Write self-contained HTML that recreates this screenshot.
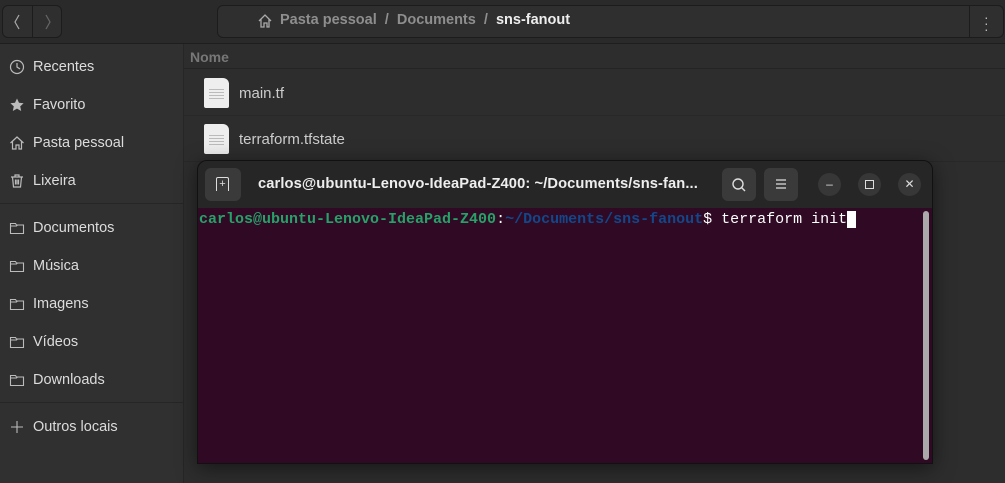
<!DOCTYPE html>
<html><head><meta charset="utf-8"><style>
*{box-sizing:border-box;margin:0;padding:0}
body{width:1005px;height:483px;background:#2d2d2d;font-family:"Liberation Sans",sans-serif;overflow:hidden;position:relative;color:#ddd}
.abs{position:absolute}
.hdr{left:0;top:0;width:1005px;height:44px;background:#2a2a2a;border-bottom:1px solid #1e1e1e}
.side{left:0;top:44px;width:184px;height:439px;background:#303030;border-right:1px solid #262626}
.si{position:absolute;left:9px;font-size:14.5px;color:#dcdcdc;display:flex;align-items:center;gap:8px}
.si svg{width:16px;height:16px}
.sep{position:absolute;left:0;width:183px;height:1px;background:#262626}
.term{left:197px;top:160px;width:736px;height:304px;background:#300a24;border:1px solid #111;border-radius:10px 10px 0 0;box-shadow:0 4px 20px rgba(0,0,0,.5);overflow:hidden}
.tb{left:0;top:0;width:736px;height:47px;background:#262626}
.btn{position:absolute;background:#3a3a3a;border-radius:6px}
.circ{position:absolute;width:23px;height:23px;border-radius:50%;background:#373737;color:#ddd;text-align:center;font-size:12px;line-height:23px}
.file{position:absolute;width:25px;height:30px;background:#eee;border-radius:2px 6px 2px 2px;background-image:repeating-linear-gradient(#eee 0 2px,#bbb 2px 3px);background-size:15px 14px;background-position:5px 9px;background-repeat:no-repeat}
</style></head><body>
<div class="abs hdr"></div>
<div class="abs" style="left:2px;top:5px;width:60px;height:33px;border:1px solid #1c1c1c;border-radius:6px;background:#2f2f2f"></div>
<div class="abs" style="left:32px;top:5px;width:1px;height:33px;background:#1c1c1c"></div>
<svg class="abs" style="left:13px;top:14px" width="8" height="16" viewBox="0 0 8 16" fill="none" stroke="#aaa" stroke-width="1.2"><path d="M6 1L2 8l4 7"/></svg>
<svg class="abs" style="left:44px;top:14px" width="8" height="16" viewBox="0 0 8 16" fill="none" stroke="#666" stroke-width="1.2"><path d="M2 1l4 7-4 7"/></svg>
<div class="abs" style="left:217px;top:5px;width:787px;height:33px;border:1px solid #1c1c1c;border-radius:6px;background:#2f2f2f"></div>
<div class="abs" style="left:969px;top:5px;width:1px;height:33px;background:#1c1c1c"></div>
<div class="abs" style="left:984px;top:14px;color:#bbb;font-size:14px;line-height:6px">·<br>·<br>·</div>
<svg class="abs" style="left:257px;top:13px" width="16" height="16" viewBox="0 0 16 16" fill="none" stroke="#aaa" stroke-width="1.3"><path d="M2 8L8 2l6 6M4 6v8h3v-4h3v4h2V6"/></svg>
<div class="abs" style="left:280px;top:12px;font-size:14.5px;font-weight:bold;color:#8e8e8e">Pasta pessoal &nbsp;/&nbsp; Documents &nbsp;/&nbsp; <span style="color:#eee">sns-fanout</span></div>

<div class="abs side">
<div class="si" style="top:15px"><svg viewBox="0 0 16 16" fill="none" stroke="#bbb" stroke-width="1.2"><circle cx="8" cy="8" r="6.5"/><path d="M8 4v4l3 2"/></svg>Recentes</div>
<div class="si" style="top:53px"><svg viewBox="0 0 16 16"><path d="M8 1.5l2 4.3 4.6.5-3.4 3.1 1 4.6L8 11.6 3.8 14l1-4.6L1.4 6.3 6 5.8z" fill="#bbb"/></svg>Favorito</div>
<div class="si" style="top:91px"><svg viewBox="0 0 16 16" fill="none" stroke="#bbb" stroke-width="1.2"><path d="M1.5 8L8 2l6.5 6M3.5 6.5V14H7v-4h3v4h2.5V6.5"/></svg>Pasta pessoal</div>
<div class="si" style="top:129px"><svg viewBox="0 0 16 16" fill="none" stroke="#bbb" stroke-width="1.2"><path d="M2 4h12M6 4V2h4v2M3.5 4l1 10h7l1-10M6.5 6.5v5M9.5 6.5v5M8 6.5v5"/></svg>Lixeira</div>
<div class="sep" style="top:159px"></div>
<div class="si" style="top:176px"><svg viewBox="0 0 16 16" fill="none" stroke="#bbb" stroke-width="1.1"><path d="M1.5 3.5h5l1 1.5h7v8.5h-13z M1.5 6h6l1-1"/></svg>Documentos</div>
<div class="si" style="top:214px"><svg viewBox="0 0 16 16" fill="none" stroke="#bbb" stroke-width="1.1"><path d="M1.5 3.5h5l1 1.5h7v8.5h-13z M1.5 6h6l1-1"/></svg>Música</div>
<div class="si" style="top:252px"><svg viewBox="0 0 16 16" fill="none" stroke="#bbb" stroke-width="1.1"><path d="M1.5 3.5h5l1 1.5h7v8.5h-13z M1.5 6h6l1-1"/></svg>Imagens</div>
<div class="si" style="top:290px"><svg viewBox="0 0 16 16" fill="none" stroke="#bbb" stroke-width="1.1"><path d="M1.5 3.5h5l1 1.5h7v8.5h-13z M1.5 6h6l1-1"/></svg>Vídeos</div>
<div class="si" style="top:328px"><svg viewBox="0 0 16 16" fill="none" stroke="#bbb" stroke-width="1.1"><path d="M1.5 3.5h5l1 1.5h7v8.5h-13z M1.5 6h6l1-1"/></svg>Downloads</div>
<div class="sep" style="top:358px"></div>
<div class="si" style="top:375px"><svg viewBox="0 0 16 16" fill="none" stroke="#bbb" stroke-width="1.1"><path d="M8 2v12M2 8h12"/></svg>Outros locais</div>
</div>

<div class="abs" style="left:184px;top:45px;width:821px;height:24px;border-bottom:1px solid #242424"></div>
<div class="abs" style="left:190px;top:49px;font-size:14px;font-weight:bold;color:#777">Nome</div>
<div class="abs" style="left:184px;top:115px;width:821px;height:1px;background:#282828"></div>
<div class="abs" style="left:184px;top:161px;width:821px;height:1px;background:#282828"></div>
<div class="file" style="left:204px;top:78px"></div>
<div class="abs" style="left:239px;top:85px;font-size:15px;color:#ccc">main.tf</div>
<div class="file" style="left:204px;top:124px"></div>
<div class="abs" style="left:239px;top:131px;font-size:15px;color:#ccc">terraform.tfstate</div>

<div class="abs term">
<div class="abs tb"></div>
<div class="btn" style="left:7px;top:7px;width:36px;height:33px"></div>
<div class="abs" style="left:18px;top:16px;width:13px;height:14px;border:1.3px solid #ddd;border-bottom:none;border-radius:2px 2px 0 0;color:#ddd;font-size:11px;line-height:12px;text-align:center">+</div>
<div class="abs" style="left:60px;top:15px;font-size:14.7px;font-weight:bold;color:#eee;letter-spacing:0.1px">carlos@ubuntu-Lenovo-IdeaPad-Z400: ~/Documents/sns-fan...</div>
<div class="btn" style="left:524px;top:7px;width:34px;height:33px"></div>
<svg class="abs" style="left:533px;top:16px" width="16" height="16" viewBox="0 0 16 16" fill="none" stroke="#ddd" stroke-width="1.4"><circle cx="7" cy="7" r="5"/><path d="M10.5 10.5L14 14"/></svg>
<div class="btn" style="left:566px;top:7px;width:34px;height:33px"></div>
<svg class="abs" style="left:577px;top:17px" width="12" height="12" viewBox="0 0 12 12" stroke="#ddd" stroke-width="1.3"><path d="M1 2h10M1 6h10M1 10h10"/></svg>
<div class="circ" style="left:620px;top:12px">–</div>
<div class="circ" style="left:660px;top:12px"><div style="width:9px;height:9px;border:1.5px solid #ddd;margin:7px auto"></div></div>
<div class="circ" style="left:700px;top:12px">✕</div>
<div class="abs" style="left:1px;top:50px;font-family:'Liberation Mono',monospace;font-size:15px;white-space:pre;color:#fff"><span style="color:#26a269;font-weight:bold">carlos@ubuntu-Lenovo-IdeaPad-Z400</span>:<span style="color:#12488b;font-weight:bold">~/Documents/sns-fanout</span>$ terraform init<span style="background:#fff"> </span></div>
<div class="abs" style="left:725px;top:50px;width:6px;height:249px;background:#aaa;border-radius:3px"></div>
</div>
</body></html>
